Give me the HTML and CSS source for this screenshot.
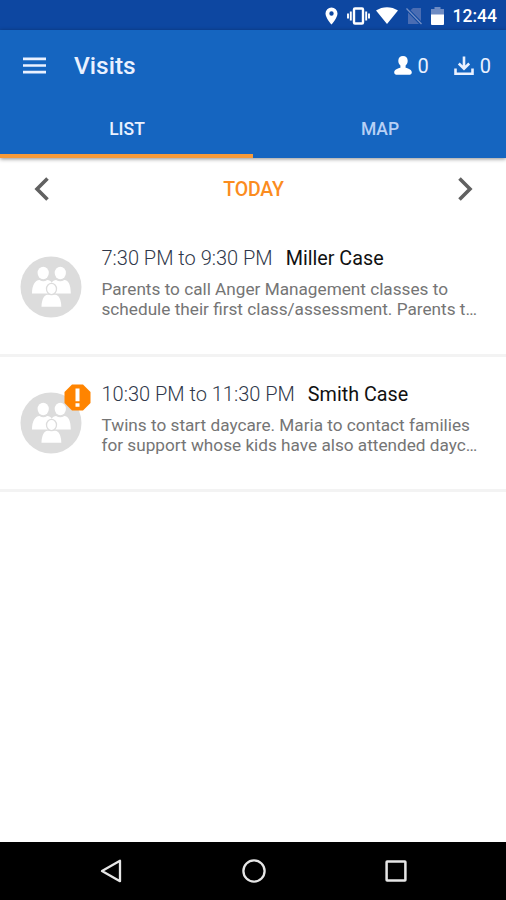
FILE: index.html
```html
<!DOCTYPE html>
<html lang="en">
<head>
  <meta charset="UTF-8">
  <meta name="viewport" content="width=device-width, initial-scale=1">
  <title>Visits</title>
  <link rel="stylesheet" href="styles.css">
</head>
<body>

<svg class="defs" width="0" height="0">
  <symbol id="family" viewBox="0 0 62 62">
    <circle cx="31" cy="31" r="30.5" fill="#dcdcdc"/>
    <g fill="#fff">
      <ellipse cx="23.2" cy="17" rx="5.6" ry="6.2"/>
      <ellipse cx="40.3" cy="17" rx="5.6" ry="6.2"/>
      <path d="M12 37.600c0-8 3-13.600 7.500-13.600 2.500 1.800 5.200 1.800 7.700 0 2.200 0 3.600 1 4.600 2.800 1-1.800 2.400-2.800 4.300-2.800 2.500 1.800 5.700 1.800 8.200 0 4.500 0 6.500 5.600 6.500 13.600z"/>
      <path d="M21.500 50.700c0-6.500 2.500-12 6-12h7.800c3.500 0 6 5.500 6 12z"/>
      <ellipse cx="31.500" cy="33" rx="5" ry="5.600" stroke="#dcdcdc" stroke-width="1.300"/>
    </g>
  </symbol>
</svg>

<div class="screen">
  <div class="status">
    <svg class="pin" width="13" height="18" viewBox="0 0 13 18"><path fill="#fff" fill-rule="evenodd" d="M6.500 0.500a6 6 0 0 0-6 6c0 4.500 6 11 6 11s6-6.500 6-11a6 6 0 0 0-6-6zm0 3.800a2.200 2.200 0 1 1 0 4.400 2.200 2.200 0 0 1 0-4.400z"/></svg>
    <svg class="vibrate" width="23" height="18" viewBox="0 0 23 18"><path fill="none" stroke="#fff" stroke-width="1.900" d="M1 6.500v5M3.800 4.500v9M19.200 4.500v9M22 6.500v5"/><rect x="7" y="1.500" width="9" height="15" rx="1" fill="none" stroke="#fff" stroke-width="2.400"/></svg>
    <svg class="wifi" width="22" height="17" viewBox="0 0 22 17"><path fill="#fff" d="M0 3.500C6.500-1 15.500-1 22 3.500L11 17z"/></svg>
    <svg class="sim" width="16" height="18" viewBox="0 0 16 18"><path fill="#4a6db3" d="M15 1v13L4.500 3.200 7 1zM2 5.500L13 17H2z"/><path stroke="#7590c5" stroke-width="1.300" d="M.5 1.500l15 15.500"/></svg>
    <svg class="battery" width="13" height="18" viewBox="0 0 13 18"><path fill="#6e8bc3" d="M0 2h3.500V0h6v2H13v6H0z"/><path fill="#fff" d="M0 7.500h13V17a1 1 0 0 1-1 1H1a1 1 0 0 1-1-1z"/></svg>
    <span class="clock">12:44</span>
  </div>

  <header class="header">
    <div class="toolbar">
      <svg class="menu" width="23" height="17" viewBox="0 0 23 17"><path stroke="#eaf1ff" stroke-width="2.700" d="M0 1.800h23M0 8.500h23M0 15.200h23"/></svg>
      <h1 class="title">Visits</h1>
      <div class="counter people">
        <svg width="18" height="19" viewBox="0 0 18 19"><path fill="#fff" d="M9 0c2.900 0 4.700 2 4.700 4.700 0 2.100-.8 3.700-2.100 4.700v2.400c3.400.8 6.200 2 6.200 4.700 0 1.500-1.200 2.300-3.300 2.300h-11c-2.100 0-3.300-.8-3.300-2.300 0-2.700 2.800-3.900 6.200-4.700V9.400C5.100 8.400 4.300 6.800 4.300 4.700 4.300 2 6.100 0 9 0z"/></svg>
        <span>0</span>
      </div>
      <div class="counter">
        <svg width="20" height="20" viewBox="0 0 20 20"><path fill="none" stroke="#eaf1ff" stroke-width="2.600" d="M10 .5v12M4.800 7.500L10 12.700l5.200-5.200M1.500 12.500v5.300h17v-5.300"/></svg>
        <span>0</span>
      </div>
    </div>
    <nav class="tabs">
      <a class="tab active">LIST</a>
      <a class="tab">MAP</a>
    </nav>
  </header>

  <div class="day">
    <svg width="15" height="24" viewBox="0 0 15 24"><path fill="none" stroke="#616161" stroke-width="3.600" d="M13.500 1.500L3 12l10.500 10.500"/></svg>
    <span class="today">TODAY</span>
    <svg width="15" height="24" viewBox="0 0 15 24"><path fill="none" stroke="#616161" stroke-width="3.600" d="M1.500 1.500L12 12 1.500 22.500"/></svg>
  </div>

  <main class="list">
    <article class="visit">
      <div class="avatar">
        <svg width="62" height="62"><use href="#family"/></svg>
      </div>
      <div class="info">
        <div class="line"><span class="time">7:30 PM to 9:30 PM</span><span class="name">Miller Case</span></div>
        <p class="note">Parents to call Anger Management classes to<br>schedule their first class/assessment. Parents t…</p>
      </div>
    </article>
    <article class="visit">
      <div class="avatar">
        <svg width="62" height="62"><use href="#family"/></svg>
        <svg class="alert" width="27" height="27" viewBox="0 0 27 27"><path fill="#ff8400" d="M8 .5h11L26.500 8v11L19 26.500H8L.5 19V8z"/><path fill="#fff" d="M11.500 4.500h4v12.700h-4zM11.500 19.200h4v3.500h-4z"/></svg>
      </div>
      <div class="info">
        <div class="line"><span class="time">10:30 PM to 11:30 PM</span><span class="name">Smith Case</span></div>
        <p class="note">Twins to start daycare. Maria to contact families<br>for support whose kids have also attended dayc…</p>
      </div>
    </article>
  </main>

  <footer class="navbar">
    <svg width="24" height="24" viewBox="0 0 24 24"><path fill="none" stroke="#e6e6e6" stroke-width="2.300" stroke-linejoin="round" d="M21 1.800v20.400L3 12z"/></svg>
    <svg width="24" height="24" viewBox="0 0 24 24"><circle cx="12" cy="12" r="10.600" fill="none" stroke="#e6e6e6" stroke-width="2.300"/></svg>
    <svg width="24" height="24" viewBox="0 0 24 24"><rect x="2.600" y="2.600" width="18.800" height="18.800" rx=".5" fill="none" stroke="#e6e6e6" stroke-width="2.500"/></svg>
  </footer>
</div>

</body>
</html>
```
FILE: styles.css
```css
* {
  box-sizing: border-box;
}
body {
  margin: 0;
  background: #fff;
  font-family: Roboto, sans-serif;
}
svg {
  display: block;
  flex: none;
}
.defs {
  position: absolute;
}
.screen {
  display: flex;
  flex-direction: column;
  width: 506px;
  height: 900px;
  overflow: hidden;
}
.status {
  display: flex;
  align-items: center;
  height: 30px;
  padding: 1px 9px 0 325px;
  background: #0d47a1;
  color: #fff;
}
.vibrate {
  margin-left: 9px;
}
.wifi {
  margin-left: 6px;
}
.sim {
  margin-left: 8px;
}
.battery {
  margin-left: 9px;
}
.clock {
  margin-left: auto;
  font-size: 17.5px;
  font-weight: 500;
}
.header {
  height: 128px;
  background: #1565c0;
  box-shadow: 0 1px 4px rgba(0, 0, 0, 0.45);
  z-index: 1;
}
.toolbar {
  display: flex;
  align-items: center;
  height: 71px;
  padding: 0 15px 0 23px;
  color: #eaf1ff;
}
.title {
  margin: 0 auto 0 28px;
  font-size: 24.5px;
  font-weight: 500;
}
.counter {
  display: flex;
  align-items: center;
  gap: 6px;
  font-size: 20px;
}
.people {
  margin-right: 25px;
}
.tabs {
  display: flex;
  height: 57px;
}
.tab {
  flex: 1;
  padding: 17px 0 0 1px;
  border-bottom: 4px solid transparent;
  color: #b7d0f5;
  font-size: 17.5px;
  font-weight: 500;
  line-height: 23px;
  text-align: center;
}
.tab.active {
  border-color: #f79a38;
  color: #eaf1ff;
}
.day {
  display: flex;
  align-items: center;
  justify-content: space-between;
  height: 63px;
  padding: 0 33px 1px 34px;
}
.today {
  color: #fb8c1e;
  font-size: 19.5px;
  font-weight: 500;
  letter-spacing: -0.2px;
}
.list {
  flex: 1;
}
.visit {
  display: flex;
  height: 135.5px;
  padding: 25px 0 0 20px;
  border-bottom: 3px solid #f3f3f3;
}
.avatar {
  position: relative;
  width: 62px;
  margin-top: 10px;
}
.alert {
  position: absolute;
  top: -8px;
  left: 44px;
}
.info {
  margin-left: 19.5px;
  white-space: nowrap;
}
.line {
  font-size: 20px;
  line-height: 25px;
}
.time {
  color: #30384a;
  font-weight: 300;
}
.name {
  margin-left: 13px;
  color: #111;
  font-size: 19.75px;
}
.note {
  margin: 8px 0 0;
  color: #757575;
  font-size: 17.2px;
  line-height: 20px;
}
.navbar {
  display: flex;
  align-items: center;
  justify-content: space-between;
  height: 58px;
  padding: 0 98px 0 99px;
  background: #000;
}
```
